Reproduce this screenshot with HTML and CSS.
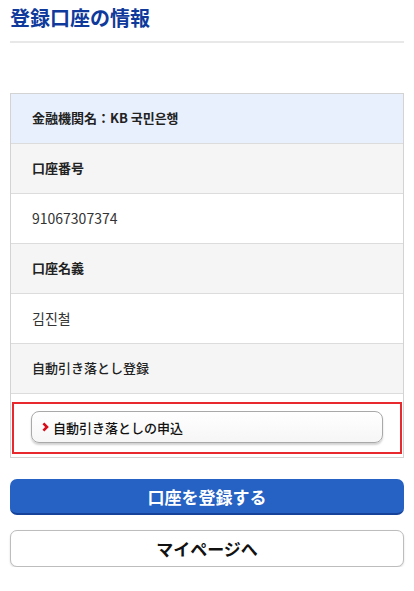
FILE: index.html
```html
<!DOCTYPE html>
<html lang="ja">
<head>
  <meta charset="UTF-8">
  <meta name="viewport" content="width=device-width, initial-scale=1.0">
  <title>登録口座の情報</title>
  <link rel="stylesheet" href="styles.css">
</head>
<body>

<h1 class="page-title">登録口座の情報</h1>

<div class="account-table">
  <div class="row row-head">金融機関名：KB 국민은행</div>
  <div class="row row-label">口座番号</div>
  <div class="row row-value">91067307374</div>
  <div class="row row-label">口座名義</div>
  <div class="row row-value">김진철</div>
  <div class="row row-label row-plain">自動引き落とし登録</div>
  <div class="row row-action">
    <div class="action-box">
      <a class="link-btn" href="#">
        <svg class="chevron" width="7" height="10" viewBox="0 0 7 10"><path d="M1.4 1.3 L5 5 L1.4 8.7" fill="none" stroke="#d80c18" stroke-width="2.6"/></svg>
        自動引き落としの申込
      </a>
    </div>
  </div>
</div>

<a class="btn btn-primary" href="#">口座を登録する</a>
<a class="btn btn-secondary" href="#">マイページへ</a>

</body>
</html>
```

FILE: styles.css
```css
body {
  font-family: "Noto Sans CJK JP", "Noto Sans", sans-serif;
  background-color: #fff;
  color: #222;
  margin: 0;
  padding: 0 10px;
}

a {
  text-decoration: none;
}

/* Titre */
.page-title {
  margin: 0;
  padding: 4px 0 9px;
  font-size: 20px;
  line-height: 28px;
  font-weight: bold;
  color: #0f3a9c;
  border-bottom: 2px solid #e8e8e8;
}

/* Tableau du compte */
.account-table {
  margin-top: 50px;
  border: 1px solid #d3d3d3;
}

.row {
  height: 47px;
  display: flex;
  align-items: center;
  padding: 0 0 2px 21px;
  font-size: 13px;
  border-bottom: 1px solid #dcdcdc;
}

.row-head {
  background-color: #e8f0fe;
  font-weight: bold;
}

.row-label {
  background-color: #f5f5f5;
  font-weight: bold;
}

.row-plain {
  font-weight: 500;
}

.row-value {
  background-color: #fff;
  font-size: 14px;
  color: #333;
}

.row-action {
  height: auto;
  display: block;
  padding: 8px 1px 3px;
  border-bottom: none;
}

.action-box {
  border: 2px solid #e8292e;
  padding: 7px 17px 9px;
}

.link-btn {
  display: flex;
  align-items: center;
  height: 30px;
  padding-left: 10px;
  border: 1px solid #a9a9a9;
  border-radius: 8px;
  background: linear-gradient(#fff, #f6f6f6);
  box-shadow: 0 2px 2px rgba(0, 0, 0, 0.18);
  color: #111;
  font-size: 13px;
  font-weight: 500;
}

.chevron {
  margin-right: 4px;
}

/* Boutons */
.btn {
  display: flex;
  align-items: center;
  justify-content: center;
  box-sizing: border-box;
  font-size: 17px;
  font-weight: bold;
  border-radius: 7px;
}

.btn-primary {
  margin-top: 21px;
  height: 36px;
  background-color: #2562c4;
  border-bottom: 2px solid #16429a;
  color: #fff;
}

.btn-secondary {
  margin-top: 15px;
  height: 37px;
  background-color: #fff;
  border: 1px solid #bdbdbd;
  box-shadow: 0 1px 2px rgba(0, 0, 0, 0.15);
  color: #111;
}
```
